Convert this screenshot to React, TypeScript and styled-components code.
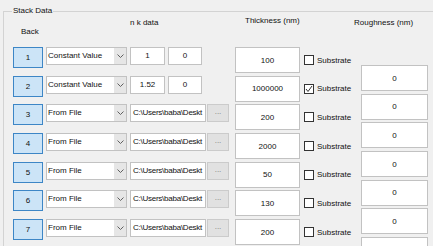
import styled, { createGlobalStyle } from "styled-components";

const GlobalStyle = createGlobalStyle`
  html, body {
    margin: 0;
    padding: 0;
    background: #f0f0f0;
    overflow: hidden;
  }
  * {
    box-sizing: border-box;
  }
`;

const Page = styled.div`
  width: 433px;
  height: 246px;
  overflow: hidden;
  font-family: "Liberation Sans", Arial, sans-serif;
  font-size: 8px;
  color: #111;
`;

const GroupBox = styled.fieldset`
  margin: 6px 0 0 3px;
  padding: 0;
  width: 470px;
  height: 300px;
  border: 1px solid #d3d3d3;
  min-width: 0;
`;

const Legend = styled.legend`
  margin-left: 8px;
  padding: 0 1px;
  font-size: 8px;
  line-height: 10px;
`;

const Header = styled.div`
  display: flex;
  height: 31px;
`;

const HeaderLabel = styled.div<{ $width: number; $top: number; $pad?: number }>`
  width: ${(p) => p.$width}px;
  padding-top: ${(p) => p.$top}px;
  padding-left: ${(p) => p.$pad ?? 0}px;
  line-height: 10px;
  white-space: nowrap;
`;

const Body = styled.div`
  display: flex;
  align-items: flex-start;
`;

const LayerList = styled.div`
  width: 357px;
  display: flex;
  flex-direction: column;
`;

const LayerRow = styled.div`
  height: 28.7px;
  display: flex;
  align-items: flex-start;
  padding-left: 9px;
`;

const BackButton = styled.div`
  width: 30px;
  height: 21px;
  background: #cce4f7;
  border: 1px solid #3d86c6;
  display: flex;
  align-items: center;
  justify-content: center;
  flex-shrink: 0;
`;

const Combo = styled.div`
  width: 81px;
  height: 18px;
  margin-left: 3px;
  border: 1px solid #c2c2c2;
  background: #fff;
  display: flex;
  flex-shrink: 0;
`;

const ComboText = styled.div`
  flex: 1;
  padding-left: 1px;
  line-height: 15px;
  white-space: nowrap;
  overflow: hidden;
`;

const ComboArrow = styled.div`
  width: 12px;
  background: #e6e6e6;
  display: flex;
  align-items: center;
  justify-content: center;
`;

const DataSlot = styled.div`
  width: 99px;
  margin-left: 3px;
  display: flex;
  gap: 3px;
  flex-shrink: 0;
`;

const TextBox = styled.div<{ $width: number }>`
  width: ${(p) => p.$width}px;
  height: 18px;
  border: 1px solid #c2c2c2;
  background: #fff;
  line-height: 16px;
  text-align: center;
  white-space: nowrap;
  overflow: hidden;
  flex-shrink: 0;
`;

const PathBox = styled(TextBox)`
  text-align: left;
  padding-left: 2px;
  letter-spacing: -0.25px;
`;

const BrowseButton = styled.div`
  width: 22px;
  height: 18px;
  margin-left: -2px;
  background: #e1e1e1;
  border: 1px solid #cbcbcb;
  color: #7a7a7a;
  text-align: center;
  line-height: 14px;
`;

const ValueBox = styled.div<{ $width: number }>`
  width: ${(p) => p.$width}px;
  height: 26px;
  border: 1px solid #c2c2c2;
  background: #fff;
  display: flex;
  align-items: center;
  justify-content: center;
  flex-shrink: 0;
`;

const ThicknessBox = styled(ValueBox)`
  margin-left: 6px;
`;

const SubstrateLabel = styled.label`
  height: 26px;
  margin-left: 4px;
  display: flex;
  align-items: center;
  gap: 3px;
`;

const CheckBox = styled.span`
  width: 10px;
  height: 10px;
  border: 1px solid #333;
  background: #fff;
  display: flex;
  align-items: center;
  justify-content: center;
`;

const RoughnessColumn = styled.div`
  padding-top: 18px;
  display: flex;
  flex-direction: column;
  gap: 2.7px;
`;

type Layer = {
  id: number;
  source: "Constant Value" | "From File";
  n?: string;
  k?: string;
  thickness: string;
  substrate: boolean;
};

const layers: Layer[] = [
  { id: 1, source: "Constant Value", n: "1", k: "0", thickness: "100", substrate: false },
  { id: 2, source: "Constant Value", n: "1.52", k: "0", thickness: "1000000", substrate: true },
  { id: 3, source: "From File", thickness: "200", substrate: false },
  { id: 4, source: "From File", thickness: "2000", substrate: false },
  { id: 5, source: "From File", thickness: "50", substrate: false },
  { id: 6, source: "From File", thickness: "130", substrate: false },
  { id: 7, source: "From File", thickness: "200", substrate: false },
];

const roughness = ["0", "0", "0", "0", "0", "0", "0"];

function Chevron() {
  return (
    <svg width="7" height="4" viewBox="0 0 7 4">
      <polyline points="0.5,0.5 3.5,3.5 6.5,0.5" fill="none" stroke="#606060" strokeWidth="1" />
    </svg>
  );
}

function Check() {
  return (
    <svg width="8" height="8" viewBox="0 0 8 8">
      <polyline points="1,4 3,6.5 7,1" fill="none" stroke="#333" strokeWidth="1" />
    </svg>
  );
}

function App() {
  return (
    <>
      <GlobalStyle />
      <Page>
        <GroupBox>
          <Legend>Stack Data</Legend>
          <Header>
            <HeaderLabel $width={126} $top={11} $pad={17}>Back</HeaderLabel>
            <HeaderLabel $width={115} $top={2}>n k data</HeaderLabel>
            <HeaderLabel $width={109} $top={0}>Thickness (nm)</HeaderLabel>
            <HeaderLabel $width={80} $top={2}>Roughness (nm)</HeaderLabel>
          </Header>
          <Body>
            <LayerList>
              {layers.map((layer) => (
                <LayerRow key={layer.id}>
                  <BackButton>{layer.id}</BackButton>
                  <Combo>
                    <ComboText>{layer.source}</ComboText>
                    <ComboArrow>
                      <Chevron />
                    </ComboArrow>
                  </Combo>
                  <DataSlot>
                    {layer.source === "Constant Value" ? (
                      <>
                        <TextBox $width={35}>{layer.n}</TextBox>
                        <TextBox $width={34}>{layer.k}</TextBox>
                      </>
                    ) : (
                      <>
                        <PathBox $width={76}>C:\Users\baba\Deskt</PathBox>
                        <BrowseButton>...</BrowseButton>
                      </>
                    )}
                  </DataSlot>
                  <ThicknessBox $width={65}>{layer.thickness}</ThicknessBox>
                  <SubstrateLabel>
                    <CheckBox>{layer.substrate && <Check />}</CheckBox>
                    Substrate
                  </SubstrateLabel>
                </LayerRow>
              ))}
            </LayerList>
            <RoughnessColumn>
              {roughness.map((r, i) => (
                <ValueBox key={i} $width={67}>
                  {r}
                </ValueBox>
              ))}
            </RoughnessColumn>
          </Body>
        </GroupBox>
      </Page>
    </>
  );
}

export default App;
